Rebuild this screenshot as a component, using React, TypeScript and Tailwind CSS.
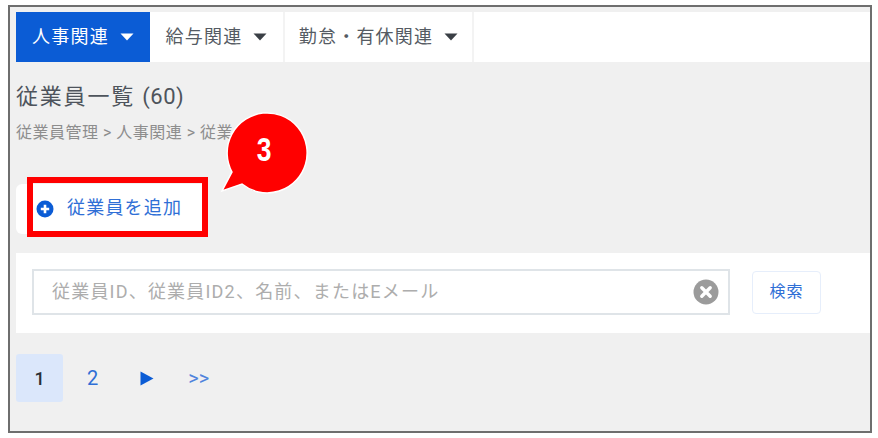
function Caret({ className }: { className: string }) {
  return (
    <svg width="14" height="8" viewBox="0 0 14 8" className={className}>
      <path d="M0.5 0.5H13.5L7 7.5Z" fill="currentColor" />
    </svg>
  );
}

function NavTab({ label, active, width }: { label: string; active?: boolean; width: string }) {
  return (
    <div
      className={`flex h-full items-center justify-center gap-[11px] text-[18px] tracking-[1.2px] ${width} ${
        active ? "bg-[#0b5cd5] text-white" : "border-r-2 border-[#f3f3f3] text-[#555b63]"
      }`}
    >
      <span className="pb-[2px]">{label}</span>
      <Caret className={active ? "text-white" : "text-[#3a3f45]"} />
    </div>
  );
}

export default function App() {
  return (
    <div className="h-[438px] w-[878px] overflow-hidden bg-white pl-[8px] pt-[5px] font-['Roboto','Noto_Sans_CJK_JP',sans-serif]">
      <div className="relative h-[428px] w-[864px] border-2 border-[#6e6e6e] bg-[#f0f0f0] pl-[6px] pt-[5px]">
        {/* Top tabs */}
        <div className="flex h-[50px] w-full items-center bg-white">
          <NavTab label="人事関連" active width="w-[134px]" />
          <NavTab label="給与関連" width="w-[135px]" />
          <NavTab label="勤怠・有休関連" width="w-[189px]" />
        </div>

        <h1 className="mt-[21px] text-[22px] leading-[28px] tracking-[1.8px] text-[#4e545c]">
          従業員一覧 <span className="tracking-[0.5px]">(60)</span>
        </h1>
        <p className="mt-[12px] whitespace-nowrap text-[16px] leading-[20px] tracking-[0.5px] text-[#8d8d8d]">
          従業員管理 &gt; 人事関連 &gt; 従業
        </p>

        {/* Add button */}
        <div className="mt-[41px] flex h-[50px] w-[192px] items-center gap-[13px] rounded-l-[6px] bg-white pl-[20px]">
          <svg width="18" height="18" viewBox="0 0 18 18">
            <circle cx="9" cy="9" r="8.5" fill="#0b5cd5" />
            <path d="M9 4.8V13.2M4.8 9H13.2" stroke="#fff" strokeWidth="2.6" />
          </svg>
          <span className="pb-[4px] text-[18px] tracking-[1.2px] text-[#2f6fd6]">従業員を追加</span>
        </div>

        {/* Search panel */}
        <div className="mt-[19px] flex h-[80px] w-full items-center bg-white pb-[2px] pl-[16px]">
          <div className="flex h-[46px] w-[698px] items-center justify-between border-2 border-[#dfe4e8] pl-[18px] pr-[9px]">
            <span className="pb-[2px] text-[18px] tracking-[1.2px] text-[#adadad]">
              従業員ID、従業員ID2、名前、またはEメール
            </span>
            <svg width="26" height="26" viewBox="0 0 26 26">
              <circle cx="13" cy="13" r="12.5" fill="#9b9b9b" />
              <path d="M8.8 8.8L17.2 17.2M17.2 8.8L8.8 17.2" stroke="#fff" strokeWidth="3.4" strokeLinecap="round" />
            </svg>
          </div>
          <button className="ml-[22px] flex h-[43px] w-[69px] items-center justify-center rounded-[4px] border border-[#e6eefb] text-[16px] tracking-[1px] text-[#2f6fd6]">
            検索
          </button>
        </div>

        {/* Pagination */}
        <div className="mt-[21px] flex h-[48px] items-center">
          <div className="flex h-[48px] w-[47px] items-center justify-center rounded-[3px] bg-[#dbe7fb] text-[18px] font-medium text-[#2b2f36]">
            1
          </div>
          <span className="ml-[24px] text-[20px] text-[#2f6fd6]">2</span>
          <svg width="14" height="15" viewBox="0 0 14 15" className="ml-[42px]">
            <path d="M0.5 0.5L13.5 7.5L0.5 14.5Z" fill="#0b5cd5" />
          </svg>
          <span className="ml-[34px] text-[20px] text-[#4f83dc]">&gt;&gt;</span>
        </div>

        {/* Red highlight and callout */}
        <div className="absolute left-[17px] top-[170px] h-[60px] w-[181px] border-[6px] border-[#ff0000]" />
        <div className="absolute left-[208px] top-[101px] h-[90px] w-[90px]">
          <svg width="90" height="90" viewBox="0 0 90 90" className="absolute left-0 top-0">
            <path d="M14 64A40 40 0 1 1 24 76L4 83Z" fill="#ff0000" stroke="#fff" strokeWidth="1.5" />
          </svg>
          <span className="absolute left-[37px] top-[25px] scale-x-[0.8] font-['Liberation_Sans',sans-serif] text-[33px] font-bold leading-[34px] text-white">
            3
          </span>
        </div>
      </div>
    </div>
  );
}
